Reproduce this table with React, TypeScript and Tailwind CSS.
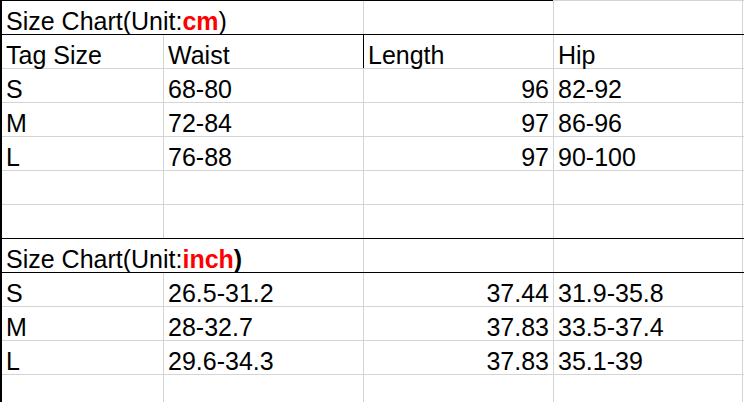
const cmRows = [
  ["S", "68-80", "96", "82-92"],
  ["M", "72-84", "97", "86-96"],
  ["L", "76-88", "97", "90-100"],
];

const inchRows = [
  ["S", "26.5-31.2", "37.44", "31.9-35.8"],
  ["M", "28-32.7", "37.83", "33.5-37.4"],
  ["L", "29.6-34.3", "37.83", "35.1-39"],
];

// column widths include the 1px right grid line
const cols = ["w-[162px]", "w-[200px]", "w-[190px]", "w-[189px]"];

const Cell = ({ w, right, children, className = "" }: { w: string; right?: boolean; children?: React.ReactNode; className?: string }) => (
  <div
    className={`${w} shrink-0 h-full flex items-end border-r border-[#d4d4d4] px-[4px] whitespace-nowrap ${right ? "justify-end" : ""} ${className}`}
  >
    {children}
  </div>
);

const Row = ({ dark, children }: { dark?: boolean; children?: React.ReactNode }) => (
  <div className={`h-[34px] flex border-b ${dark ? "border-black" : "border-[#d4d4d4]"}`}>
    {children}
    <div className="flex-1" />
  </div>
);

const EmptyRow = ({ dark }: { dark?: boolean }) => (
  <Row dark={dark}>
    {cols.map((c) => (
      <Cell key={c} w={c} />
    ))}
  </Row>
);

const Title = ({ unit, boldParen }: { unit: string; boldParen?: boolean }) => (
  <>
    <div className="w-[362px] shrink-0 h-full flex items-end border-r border-[#d4d4d4] px-[4px] whitespace-nowrap">
      <span>
        Size Chart(Unit:<span className="text-[#ff0000] font-bold">{unit}</span>
        <span className={boldParen ? "font-bold" : ""}>)</span>
      </span>
    </div>
    <Cell w={cols[2]} />
    <Cell w={cols[3]} />
  </>
);

export default function App() {
  return (
    <div
      className="w-[744px] h-[402px] overflow-hidden bg-white text-black text-[25px] leading-[26px]"
      style={{ fontFamily: '"Liberation Sans", Arial, sans-serif' }}
    >
      <div className="flex h-px">
        <div className="w-[553px] bg-black" />
        <div className="flex-1 bg-[#d4d4d4]" />
      </div>
      <div className="border-l-2 border-black">
        <Row dark>
          <Title unit="cm" />
        </Row>
        <Row>
          <Cell w={cols[0]}>Tag Size</Cell>
          <Cell w={cols[1]} className="border-black">Waist</Cell>
          <Cell w={cols[2]}>Length</Cell>
          <Cell w={cols[3]}>Hip</Cell>
        </Row>
        {cmRows.map((r) => (
          <Row key={r[0]}>
            <Cell w={cols[0]}>{r[0]}</Cell>
            <Cell w={cols[1]}>{r[1]}</Cell>
            <Cell w={cols[2]} right>{r[2]}</Cell>
            <Cell w={cols[3]}>{r[3]}</Cell>
          </Row>
        ))}
        <EmptyRow />
        <EmptyRow dark />
        <Row dark>
          <Title unit="inch" boldParen />
        </Row>
        {inchRows.map((r) => (
          <Row key={r[0]}>
            <Cell w={cols[0]}>{r[0]}</Cell>
            <Cell w={cols[1]}>{r[1]}</Cell>
            <Cell w={cols[2]} right>{r[2]}</Cell>
            <Cell w={cols[3]}>{r[3]}</Cell>
          </Row>
        ))}
        <EmptyRow />
      </div>
    </div>
  );
}
